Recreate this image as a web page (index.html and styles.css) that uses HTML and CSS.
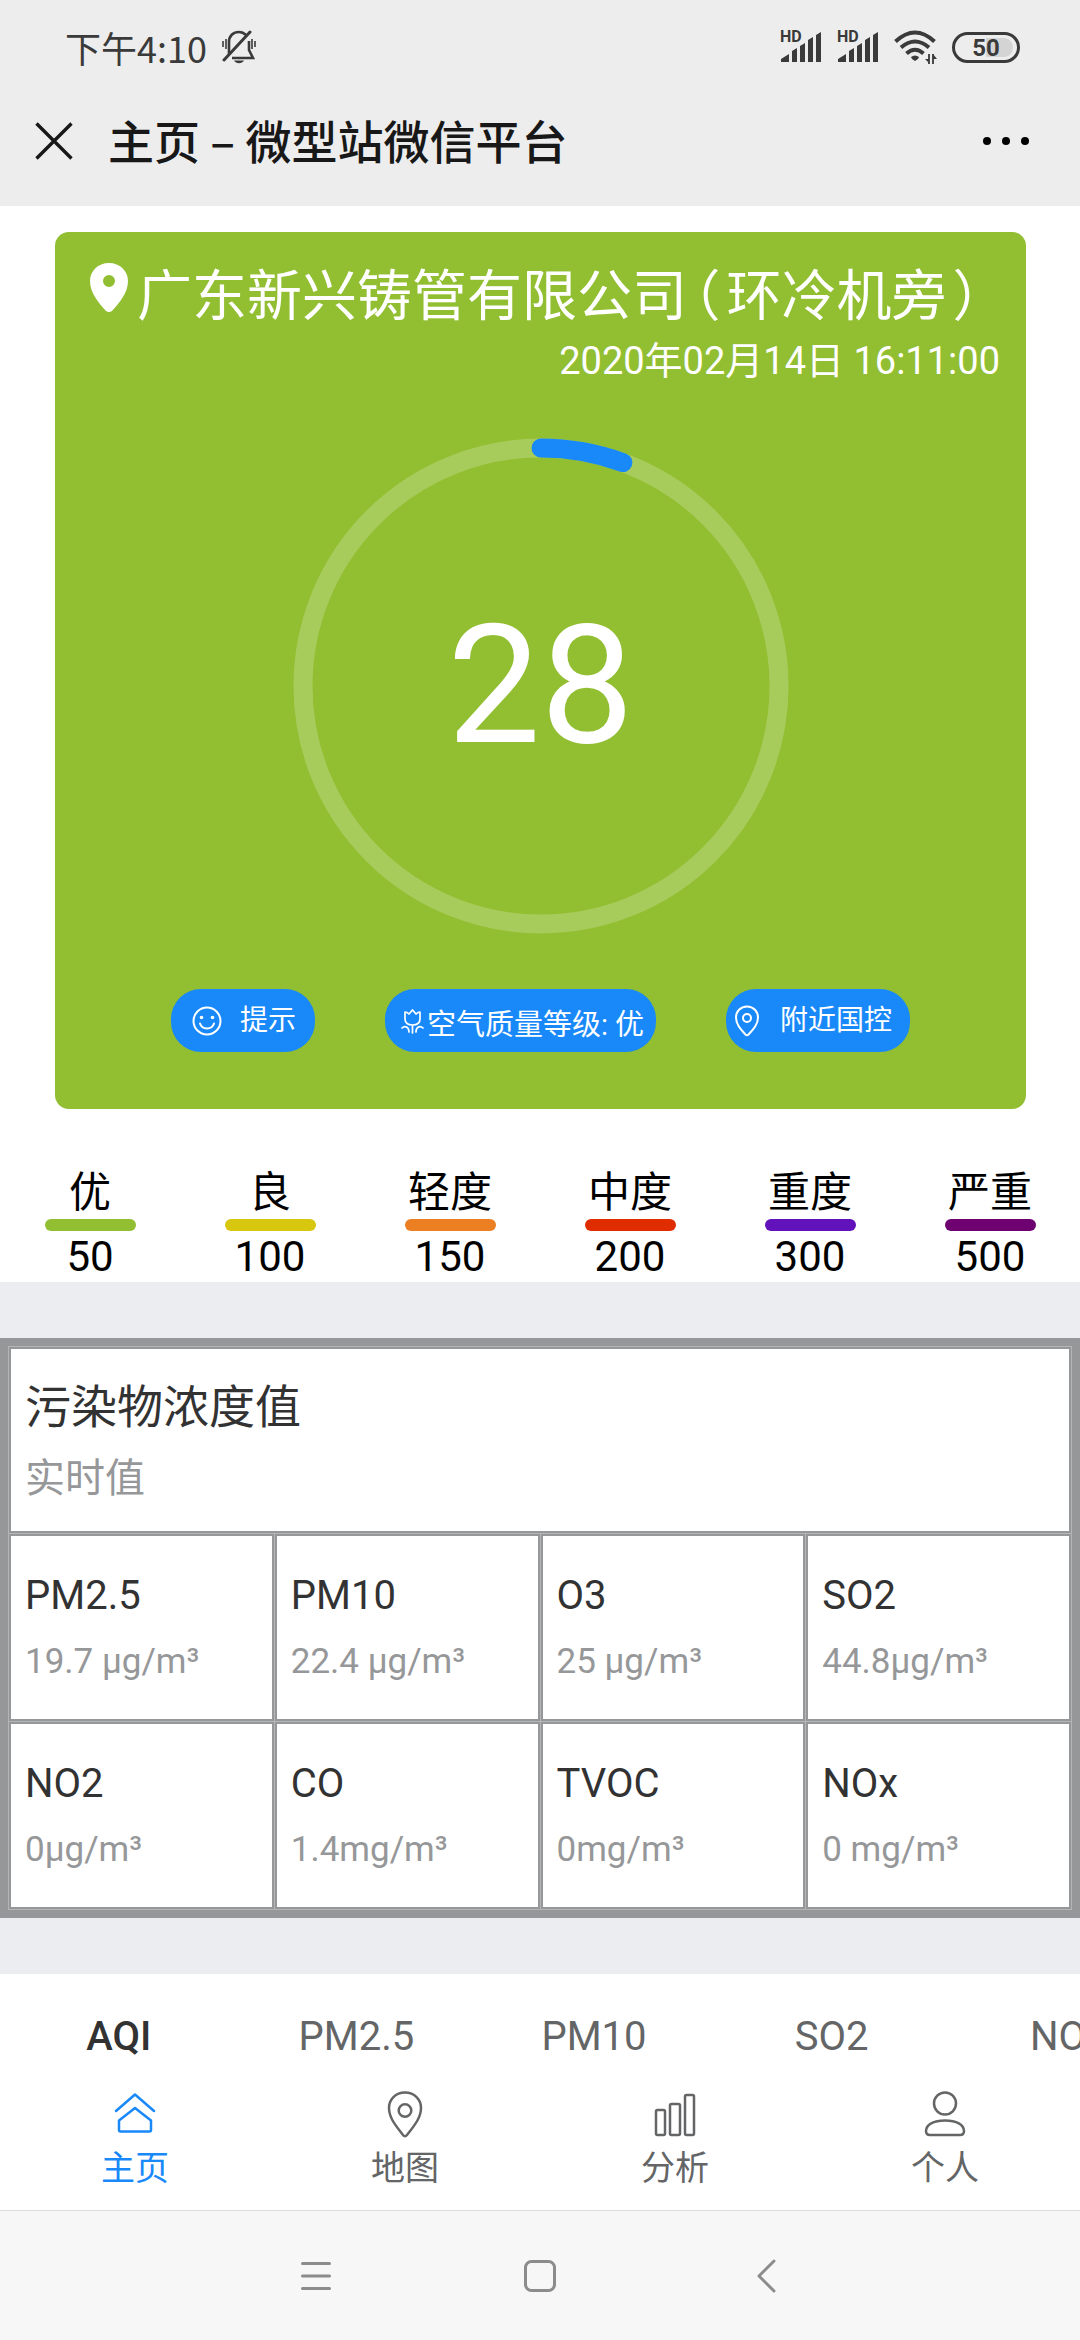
FILE: index.html
```html
<!DOCTYPE html>
<html lang="zh-CN">
<head>
<meta charset="utf-8">
<meta name="viewport" content="width=device-width, initial-scale=1">
<title>主页 – 微型站微信平台</title>
<link rel="stylesheet" href="styles.css">
</head>
<body>
<div class="app">
  <header class="top">
    <div class="status">
      <div class="status-left">
        <span class="clock">下午4:10</span>
        <svg class="bell" viewBox="0 0 34 34" fill="none" stroke="currentColor" stroke-width="2.6">
          <path d="M7 24V12c0-6 4-10 10-10 3 0 5 1 7 3M27 11v9l4 8H10" />
          <path d="M2 30 28 2" stroke-width="3" stroke-linecap="round"/>
          <path d="M1 11v6M4 9v10M30 9v10M33 11v6" stroke-width="1.6"/>
          <path d="M12 30.500h10c-2 3.500-8 3.500-10 0z" fill="currentColor" stroke="none"/>
        </svg>
      </div>
      <div class="status-right">
        <div class="signal">
          <span class="hd">HD</span>
          <svg viewBox="0 0 42 30" fill="currentColor"><path d="M1 30v-3l8-5v8zM12 30V19l5-3v14zM20 30V14l5-3v19zM28 30V8l5-3v25zM36 30V3l5-3v30z"/></svg>
        </div>
        <div class="signal">
          <span class="hd">HD</span>
          <svg viewBox="0 0 42 30" fill="currentColor"><path d="M1 30v-3l8-5v8zM12 30V19l5-3v14zM20 30V14l5-3v19zM28 30V8l5-3v25zM36 30V3l5-3v30z"/></svg>
        </div>
        <svg class="wifi" viewBox="0 0 43 34" fill="none" stroke="currentColor" stroke-width="4">
          <path d="M1.500 11.500Q21 -6.500 40.500 11.500M7 17.500Q21 5.500 35 17.500M12.500 23.500Q21 16 29.500 23.500"/>
          <path d="M17 27q4-3 8 0l-1 2-3 2-3-2z" fill="currentColor" stroke="none"/>
          <path d="M35 24v10M39 34V24" stroke-width="1.800"/>
          <path d="M31 29h4v4zM39 24l4 5h-4z" fill="currentColor" stroke="none"/>
        </svg>
        <div class="battery">50</div>
      </div>
    </div>
    <div class="titlebar">
      <button class="bar-btn" type="button" aria-label="关闭">
        <svg width="38" height="38" viewBox="0 0 38 38" fill="none" stroke="currentColor" stroke-width="3.400"><path d="M1.500 1.500l35 35M36.500 1.500l-35 35"/></svg>
      </button>
      <h1>主页 – 微型站微信平台</h1>
      <button class="bar-btn" type="button" aria-label="更多">
        <svg width="46" height="10" viewBox="0 0 46 10"><circle cx="4" cy="5" r="4"/><circle cx="23" cy="5" r="4"/><circle cx="42" cy="5" r="4"/></svg>
      </button>
    </div>
  </header>

  <main>
    <section class="card">
      <div class="station">
        <svg class="station-pin" viewBox="0 0 47 60" fill="#fff"><path fill-rule="evenodd" d="M19 5C8 5 0 13 0 23c0 12 9 22 16 30q3 2 6 0c7-8 16-18 16-30C38 13 30 5 19 5zm0 12a6 6 0 1 1 0 12 6 6 0 0 1 0-12z"/></svg>
        <h2>广东新兴铸管有限公司<span class="paren">（</span>环冷机旁<span class="paren">）</span></h2>
      </div>
      <time class="time" datetime="2020-02-14T16:11:00">2020年02月14日 16:11:00</time>
      <div class="gauge">
        <svg class="ring" viewBox="0 0 496 496" fill="none" stroke-width="19">
          <circle cx="248" cy="248" r="238" stroke="#a8cc5b"/>
          <circle cx="248" cy="248" r="238" stroke="#1989fa" stroke-linecap="round" pathLength="500" stroke-dasharray="28 472" transform="rotate(-90 248 248)"/>
        </svg>
        <strong class="aqi">28</strong>
      </div>
      <div class="pills">
        <button class="pill pill-tip" type="button">
          <svg width="30" height="30" viewBox="0 0 30 30" fill="none" stroke="#fff" stroke-width="2"><circle cx="15" cy="15" r="13.500"/><path d="M8 17.500c2 6.500 12 6.500 14 0" stroke-linecap="round"/><circle cx="9.500" cy="11.500" r="1.800" fill="#fff" stroke="none"/><circle cx="20.500" cy="11.500" r="1.800" fill="#fff" stroke="none"/></svg>
          <span>提示</span>
        </button>
        <button class="pill pill-level" type="button">
          <svg width="23" height="34" viewBox="0 0 23 34" fill="none" stroke="#fff" stroke-width="1.700" stroke-linejoin="round" stroke-linecap="round"><path d="M4 4c2 0 3 1 4 2l3.500-4L15 6c1-1 2-2 4-2v7c0 4-3 6-7.500 6S4 15 4 11zM11.500 17v8M1 20c3-3 7-1 7 4M22 20c-3-3-7-1-7 4"/></svg>
          <span>空气质量等级: 优</span>
        </button>
        <button class="pill pill-near" type="button">
          <svg width="30" height="32" viewBox="0 0 30 32" fill="none" stroke="#fff" stroke-width="2"><path d="M15 1.500C8.500 1.500 4 6.500 4 12.500c0 7 5 12 9.500 17q1.500 1.500 3 0c4.500-5 9.500-10 9.500-17 0-6-4.500-11-11-11z"/><circle cx="15" cy="13" r="4"/></svg>
          <span>附近国控</span>
        </button>
      </div>
    </section>

    <ul class="legend">
      <li><span>优</span><i class="bar good"></i><b>50</b></li>
      <li><span>良</span><i class="bar fair"></i><b>100</b></li>
      <li><span>轻度</span><i class="bar light"></i><b>150</b></li>
      <li><span>中度</span><i class="bar medium"></i><b>200</b></li>
      <li><span>重度</span><i class="bar heavy"></i><b>300</b></li>
      <li><span>严重</span><i class="bar severe"></i><b>500</b></li>
    </ul>

    <section class="values">
      <div class="cell cell-head"><h3>污染物浓度值</h3><p>实时值</p></div>
      <div class="cell"><h4>PM2.5</h4><p>19.7 µg/m³</p></div>
      <div class="cell"><h4>PM10</h4><p>22.4 µg/m³</p></div>
      <div class="cell"><h4>O3</h4><p>25 µg/m³</p></div>
      <div class="cell"><h4>SO2</h4><p>44.8µg/m³</p></div>
      <div class="cell"><h4>NO2</h4><p>0µg/m³</p></div>
      <div class="cell"><h4>CO</h4><p>1.4mg/m³</p></div>
      <div class="cell"><h4>TVOC</h4><p>0mg/m³</p></div>
      <div class="cell"><h4>NOx</h4><p>0 mg/m³</p></div>
    </section>

    <div class="tabs" role="tablist">
      <button class="tab active" type="button" role="tab" aria-selected="true">AQI</button>
      <button class="tab" type="button" role="tab">PM2.5</button>
      <button class="tab" type="button" role="tab">PM10</button>
      <button class="tab" type="button" role="tab">SO2</button>
      <button class="tab" type="button" role="tab">NO2</button>
    </div>
  </main>

  <nav class="tabbar">
    <a class="current" href="#home">
      <svg width="48" height="48" viewBox="0 0 48 48" fill="none" stroke="currentColor" stroke-width="2.500" stroke-linecap="round" stroke-linejoin="round"><path d="M5 21 24 4.500 43 21"/><path d="M8 40V30.500L24 18l16 12.500V40q0 1.500-1.500 1.500h-29Q8 41.500 8 40z"/></svg>
      <span>主页</span>
    </a>
    <a href="#map">
      <svg width="48" height="48" viewBox="0 0 48 48" fill="none" stroke="currentColor" stroke-width="2.500"><path d="M24 2.500c-9.500 0-16 7-16 15.500 0 10.500 8 19 14 27q2 2.500 4 0c6-8 14-16.500 14-27 0-8.500-6.500-15.500-16-15.500z"/><circle cx="24" cy="20.500" r="6.300"/></svg>
      <span>地图</span>
    </a>
    <a href="#analysis">
      <svg width="48" height="48" viewBox="0 0 48 48" fill="none" stroke="currentColor" stroke-width="2.500"><rect x="5" y="20" width="9" height="25" rx="1.500"/><rect x="19" y="14" width="10" height="31" rx="1.500"/><rect x="34" y="5" width="9" height="40" rx="1.500"/></svg>
      <span>分析</span>
    </a>
    <a href="#me">
      <svg width="48" height="48" viewBox="0 0 48 48" fill="none" stroke="currentColor" stroke-width="2.500"><circle cx="24" cy="13.500" r="11"/><path d="M5 41c0-6.500 7.500-10.500 19-10.500S43 34.500 43 41q0 4-4 4H9q-4 0-4-4z"/></svg>
      <span>个人</span>
    </a>
  </nav>

  <div class="sysnav">
    <button type="button" aria-label="菜单"><svg width="34" height="34" viewBox="0 0 34 34" fill="none" stroke="currentColor" stroke-width="3" stroke-linecap="round"><path d="M4.500 4.500h27M4.500 17h27M4.500 29.500h27"/></svg></button>
    <button type="button" aria-label="主屏幕"><svg width="34" height="34" viewBox="0 0 34 34" fill="none" stroke="currentColor" stroke-width="3"><rect x="2.500" y="2.500" width="29" height="29" rx="6"/></svg></button>
    <button type="button" aria-label="返回"><svg width="34" height="34" viewBox="0 0 34 34" fill="none" stroke="currentColor" stroke-width="3" stroke-linecap="round" stroke-linejoin="round"><path d="M26 2 11 17l15 15"/></svg></button>
  </div>
</div>
</body>
</html>
```
FILE: styles.css
```css
* { box-sizing: border-box; }

body {
  margin: 0;
  background: #fff;
  color: #000;
  font-family: Roboto, "Noto Sans CJK SC", sans-serif;
}

h1, h2, h3, h4, p, ul { margin: 0; padding: 0; font-weight: 400; }
button { margin: 0; padding: 0; border: 0; background: none; color: inherit; font: inherit; }
svg { display: block; flex: none; }

.app { overflow: hidden; }

/* status bar and title bar */
.top { background: #ededed; }

.status {
  display: flex;
  justify-content: space-between;
  align-items: center;
  height: 94px;
  padding: 0 60px 0 65px;
  color: #3a3a3a;
}
.status-left { display: flex; align-items: center; gap: 15px; }
.clock { font: 36px/48px "Noto Sans CJK SC", sans-serif; }
.bell { width: 34px; height: 34px; }
.status-right { display: flex; align-items: center; gap: 15px; }
.signal { position: relative; }
.signal svg { width: 42px; height: 30px; }
.hd { position: absolute; left: 0; top: -3px; font-size: 16px; line-height: 16px; font-weight: 700; }
.wifi { width: 43px; height: 34px; }
.battery {
  width: 68px;
  height: 31px;
  border: 3px solid #3a3a3a;
  border-radius: 16px;
  background: linear-gradient(90deg, transparent 50%, #d4d4d4 50%) content-box;
  padding: 3px 4px;
  font-size: 24px;
  line-height: 20px;
  font-weight: 700;
  text-align: center;
}

.titlebar {
  display: flex;
  align-items: center;
  height: 112px;
  padding: 0 51px 18px 35px;
  color: #181818;
}
.titlebar h1 { flex: 1; margin-left: 35px; padding-bottom: 5px; font: 500 46px/64px "Noto Sans CJK SC", sans-serif; }

/* air quality card */
.card {
  margin: 26px 54px 0 55px;
  padding: 26px 0 57px;
  border-radius: 14px;
  background: #92be32;
  color: #fff;
}
.station { display: flex; align-items: flex-start; padding-left: 35px; }
.station-pin { width: 47px; height: 60px; }
.station h2 { font-size: 55px; line-height: 76px; white-space: nowrap; }
.paren { padding: 0 6px; font-feature-settings: "halt"; }
.time { display: block; padding-right: 26px; font-size: 38px; line-height: 54px; text-align: right; }

.gauge { display: grid; place-items: center; margin-top: 50px; }
.ring, .aqi { grid-area: 1 / 1; }
.ring { width: 496px; height: 496px; }
.aqi { font-size: 166px; line-height: 200px; font-weight: 400; }

.pills { display: flex; justify-content: center; gap: 70px; margin-top: 55px; }
.pill {
  display: flex;
  align-items: center;
  gap: 18px;
  height: 63px;
  border-radius: 30px;
  background: #1989fa;
  font-size: 28px;
  line-height: 42px;
  white-space: nowrap;
}
.pill-tip { padding: 0 19px 0 21px; }
.pill-level { gap: 3px; padding: 8px 12px 0 16px; font-size: 29px; }
.pill-near { padding: 0 18px 0 6px; }

/* level legend */
.legend { display: grid; grid-template-columns: repeat(6, 1fr); padding-top: 57px; list-style: none; }
.legend li { display: flex; flex-direction: column; align-items: center; font-size: 42px; }
.legend span { line-height: 53px; }
.legend b { line-height: 51px; font-weight: 400; }
.bar { width: 91px; height: 12px; border-radius: 6px; }
.good { background: #92be32; }
.fair { background: #d7c70f; }
.light { background: #ec7f22; }
.medium { background: #e02d00; }
.heavy { background: #6112bb; }
.severe { background: #6e0271; }

/* pollutant grid */
.values {
  display: grid;
  grid-template-columns: repeat(4, 1fr);
  gap: 1px;
  padding: 1px;
  border: 8px solid #969799;
  background: #b4b5b7;
  box-shadow: 0 0 0 56px #ebedf0;
  margin: 56px 0;
}
.cell { padding: 30px 14px 33px; border: 2px solid #969799; background: #fff; color: #323233; }
.cell h4 { font-size: 40px; line-height: 60px; }
.cell p { margin-top: 12px; color: #969799; font-size: 35px; line-height: 48px; }
.cell-head { grid-column: 1 / -1; padding: 28px 14px 24px; }
.cell-head h3 { font-size: 46px; line-height: 60px; }
.cell-head p { margin-top: 14px; font-size: 40px; line-height: 56px; }

/* chart tabs */
.tabs { position: relative; display: flex; overflow: hidden; padding: 33px 0 5px; background: #fff; }
.tab { flex: 0 0 22%; color: #646566; font-size: 40px; line-height: 60px; }
.tab.active { color: #323233; font-weight: 500; }

/* bottom navigation */
.tabbar { display: grid; grid-template-columns: repeat(4, 1fr); padding: 18px 0 16px; }
.tabbar a {
  display: flex;
  flex-direction: column;
  align-items: center;
  gap: 4px;
  color: #646566;
  font-size: 34px;
  line-height: 52px;
  text-decoration: none;
}
.tabbar .current { color: #1989fa; }

.sysnav {
  display: flex;
  justify-content: center;
  gap: 191px;
  padding: 48px 0 47px;
  border-top: 1px solid #dadada;
  background: #f7f7f7;
  color: #8c8c8c;
}
```
